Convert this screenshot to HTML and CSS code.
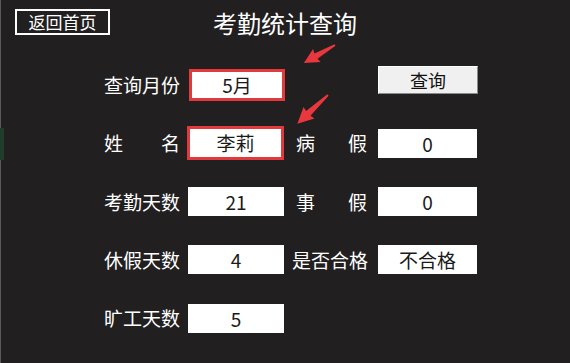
FILE: index.html
```html
<!DOCTYPE html>
<html lang="zh-CN">
<head>
<meta charset="utf-8">
<title>考勤统计查询</title>
<link rel="stylesheet" href="styles.css">
</head>
<body>
<div class="page">
  <div class="edge"></div>
  <div class="edge-mark"></div>
  <header class="header">
    <div class="header-left"><button class="back">返回首页</button></div>
    <h1 class="title">考勤统计查询</h1>
    <div></div>
  </header>
  <main class="form">
    <div class="label">查询月份</div>
    <div class="field hl hl-sm">5月</div>
    <div></div>
    <button class="query">查询</button>

    <div class="label spread"><span>姓</span><span>名</span></div>
    <div class="field hl">李莉</div>
    <div class="label spread inset"><span>病</span><span>假</span></div>
    <div class="field wide">0</div>

    <div class="label">考勤天数</div>
    <div class="field">21</div>
    <div class="label spread inset"><span>事</span><span>假</span></div>
    <div class="field wide">0</div>

    <div class="label">休假天数</div>
    <div class="field">4</div>
    <div class="label">是否合格</div>
    <div class="field wide">不合格</div>

    <div class="label">旷工天数</div>
    <div class="field">5</div>
  </main>
  <svg class="arrows" width="570" height="363" viewBox="0 0 570 363" aria-hidden="true">
    <polygon fill="#e8383d" transform="translate(335,45) rotate(149.9)" points="0,-0.9 22,-3 21,-7.5 36,0 21,7.5 22,3 0,0.9"/>
    <polygon fill="#e8383d" transform="translate(328,95) rotate(136.9)" points="0,-0.9 27,-3.2 26,-8 42,0 26,8 27,3.2 0,0.9"/>
  </svg>
</div>
</body>
</html>
```
FILE: styles.css
```css
html, body {
  margin: 0;
  padding: 0;
  background: #221f21;
}
body {
  font-family: "Noto Sans CJK SC", "Noto Sans", sans-serif;
  color: #ffffff;
}
.page {
  position: relative;
  width: 570px;
  height: 363px;
  background: #221f21;
  overflow: hidden;
}
.edge {
  position: absolute;
  left: 0;
  top: 0;
  width: 1px;
  height: 363px;
  background: #5a5a5a;
}
.edge-mark {
  position: absolute;
  left: 0;
  top: 128px;
  width: 4px;
  height: 32px;
  background: #1f3d2a;
}
.header {
  display: grid;
  grid-template-columns: 1fr auto 1fr;
  align-items: start;
  padding-top: 9px;
}
.back {
  margin-left: 15px;
  width: 95px;
  height: 26px;
  box-sizing: border-box;
  border: 2px solid #ffffff;
  background: transparent;
  color: #ffffff;
  font-family: inherit;
  font-size: 17px;
  line-height: 20px;
  padding: 0;
}
.title {
  margin: 2px 0 0;
  font-size: 24px;
  line-height: 24px;
  font-weight: 400;
  color: #ffffff;
}
.form {
  display: grid;
  grid-template-columns: 76px 96px 78px 99px;
  grid-auto-rows: 34px;
  column-gap: 8px;
  row-gap: 24.3px;
  align-items: center;
  padding-left: 104px;
  margin-top: 33px;
}
.label {
  font-size: 19px;
  line-height: 24px;
  white-space: nowrap;
  color: #ffffff;
}
.spread {
  display: flex;
  justify-content: space-between;
}
.inset {
  padding: 0 3px 0 4px;
}
.field {
  height: 29px;
  box-sizing: border-box;
  background: #ffffff;
  color: #1a1a1a;
  font-size: 19px;
  line-height: 29px;
  text-align: center;
}
.wide {
  width: 99px;
}
.hl {
  width: 97px;
  height: 34px;
  margin-left: -1px;
  border: 3px solid #e2393c;
  line-height: 28px;
}
.hl-sm {
  height: 32px;
  margin-left: 1px;
  width: 96px;
  line-height: 26px;
}
.query {
  align-self: start;
  margin-top: -2px;
  width: 100px;
  height: 28px;
  box-sizing: border-box;
  background: #f0f0f0;
  border: 1px solid;
  border-color: #ffffff #8a8a8a #8a8a8a #ffffff;
  color: #111111;
  font-family: inherit;
  font-size: 18px;
  line-height: 24px;
  padding: 0;
}
.arrows {
  position: absolute;
  left: 0;
  top: 0;
  pointer-events: none;
}
```
